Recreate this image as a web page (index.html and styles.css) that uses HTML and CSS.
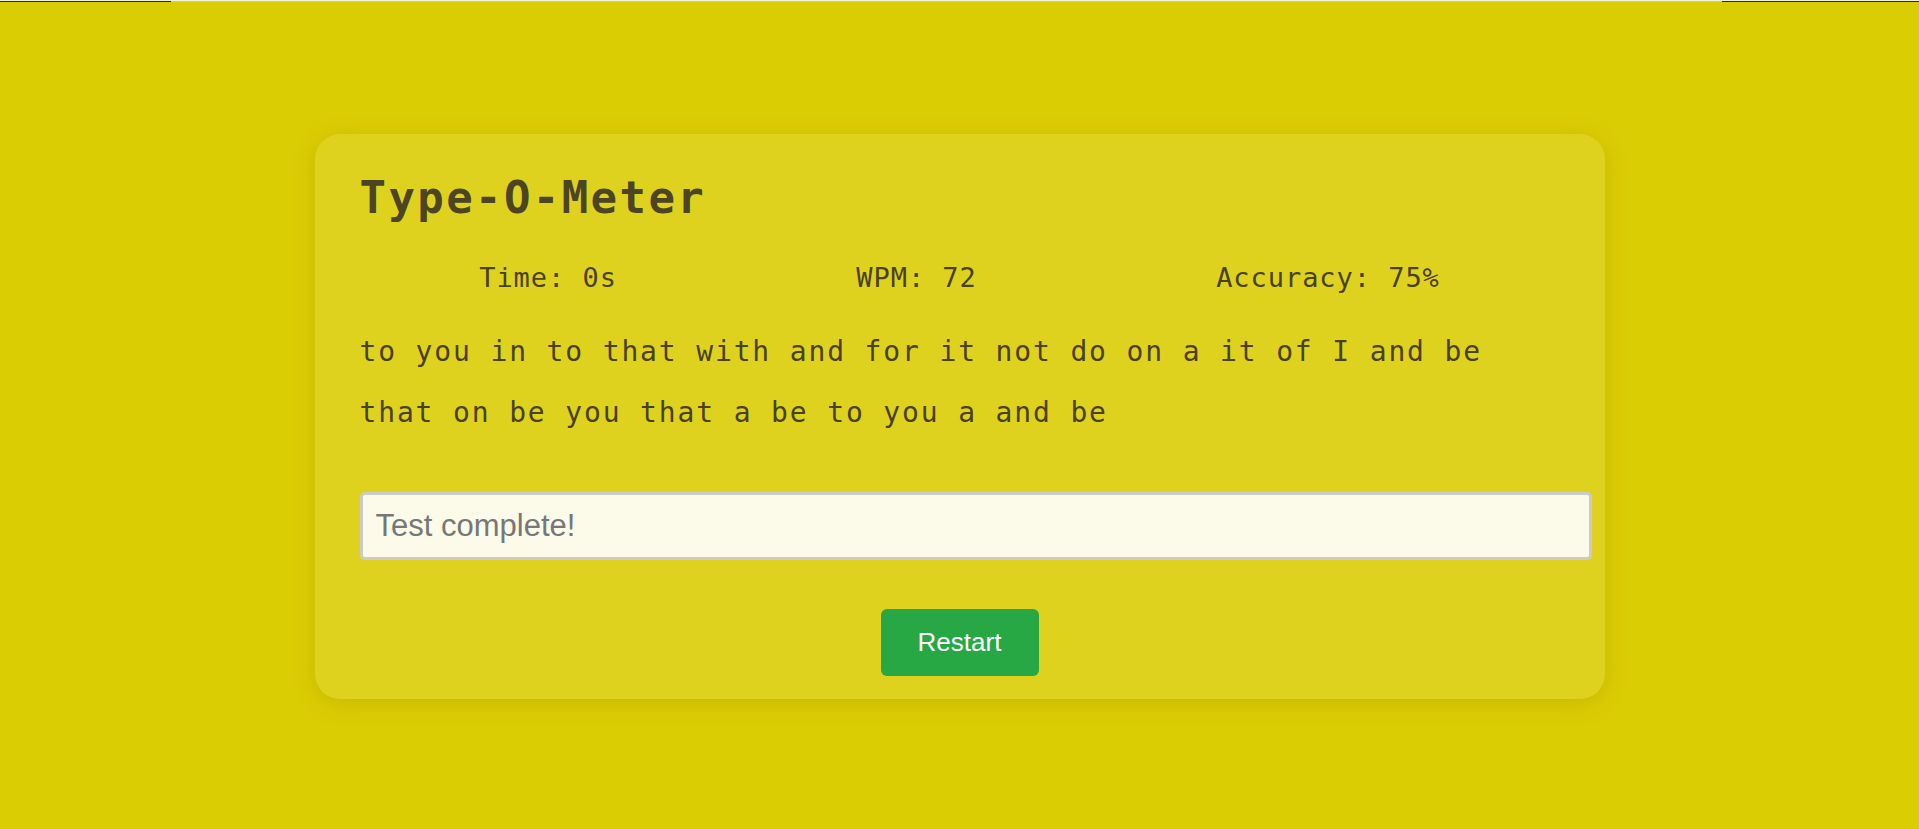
FILE: index.html
```html
<!DOCTYPE html>
<html lang="en">
<head>
<meta charset="utf-8">
<title>Type-O-Meter</title>
<link rel="stylesheet" href="styles.css">
</head>
<body>
<div class="topline">
  <div class="tl-row1"></div>
  <div class="tl-row2"><span class="tl-dark tl-left"></span><span class="tl-gray"></span><span class="tl-dark tl-right"></span></div>
</div>
<main class="page">
  <section class="card">
    <h1 class="title">Type-O-Meter</h1>
    <div class="stats">
      <span class="stat">Time: 0s</span>
      <span class="stat">WPM: 72</span>
      <span class="stat">Accuracy: 75%</span>
    </div>
    <p class="passage">to you in to that with and for it not do on a it of I and be that on be you that a be to you a and be</p>
    <input class="entry" type="text" placeholder="Test complete!" disabled>
    <div class="actions">
      <button class="restart" type="button">Restart</button>
    </div>
  </section>
</main>
</body>
</html>
```

FILE: styles.css
```css
html, body {
  margin: 0;
  padding: 0;
}
body {
  background: #dbcd04;
  min-height: 829px;
  font-family: "DejaVu Sans Mono", "Liberation Mono", monospace;
  color: #4a4121;
}
.topline {
  height: 3px;
}
.tl-row1 {
  height: 1px;
  background: #f2f0e0;
}
.tl-row2 {
  height: 1px;
  display: flex;
}
.tl-dark {
  background: #2a2a20;
}
.tl-left {
  width: 171px;
}
.tl-right {
  width: 197px;
}
.tl-gray {
  flex: 1;
  background: #c8c6bc;
}
.page {
  display: flex;
  justify-content: center;
  padding-top: 131px;
}
.card {
  width: 1200px;
  padding: 38px 45px 23px;
  background: #dfd21f;
  border-radius: 25px;
  box-shadow: 0 4px 22px rgba(150, 130, 0, 0.28);
}
.title {
  margin: 0;
  font-size: 44px;
  line-height: 52px;
  font-weight: bold;
  letter-spacing: 2.4px;
  color: #4d4423;
}
.stats {
  margin-top: 38px;
  display: flex;
  justify-content: space-around;
  font-size: 27px;
  line-height: 32px;
  letter-spacing: 0.95px;
}
.passage {
  margin: 27px 0 0;
  font-size: 28px;
  line-height: 61px;
  letter-spacing: 1.85px;
}
.entry {
  display: block;
  margin-top: 49px;
  width: 100%;
  box-sizing: content-box;
  padding: 13px;
  border: 3px solid #cbcbcb;
  border-radius: 5px;
  background: #fcfbea;
  font-family: "Liberation Sans", Arial, sans-serif;
  font-size: 31px;
  color: #333;
  outline: none;
}
.entry::placeholder {
  color: #777;
  opacity: 1;
}
.actions {
  margin-top: 49px;
  display: flex;
  justify-content: center;
}
.restart {
  width: 158px;
  height: 67px;
  border: none;
  border-radius: 6px;
  background: #28a745;
  color: #fff;
  font-family: "Liberation Sans", Arial, sans-serif;
  font-size: 26px;
  cursor: pointer;
}
```
